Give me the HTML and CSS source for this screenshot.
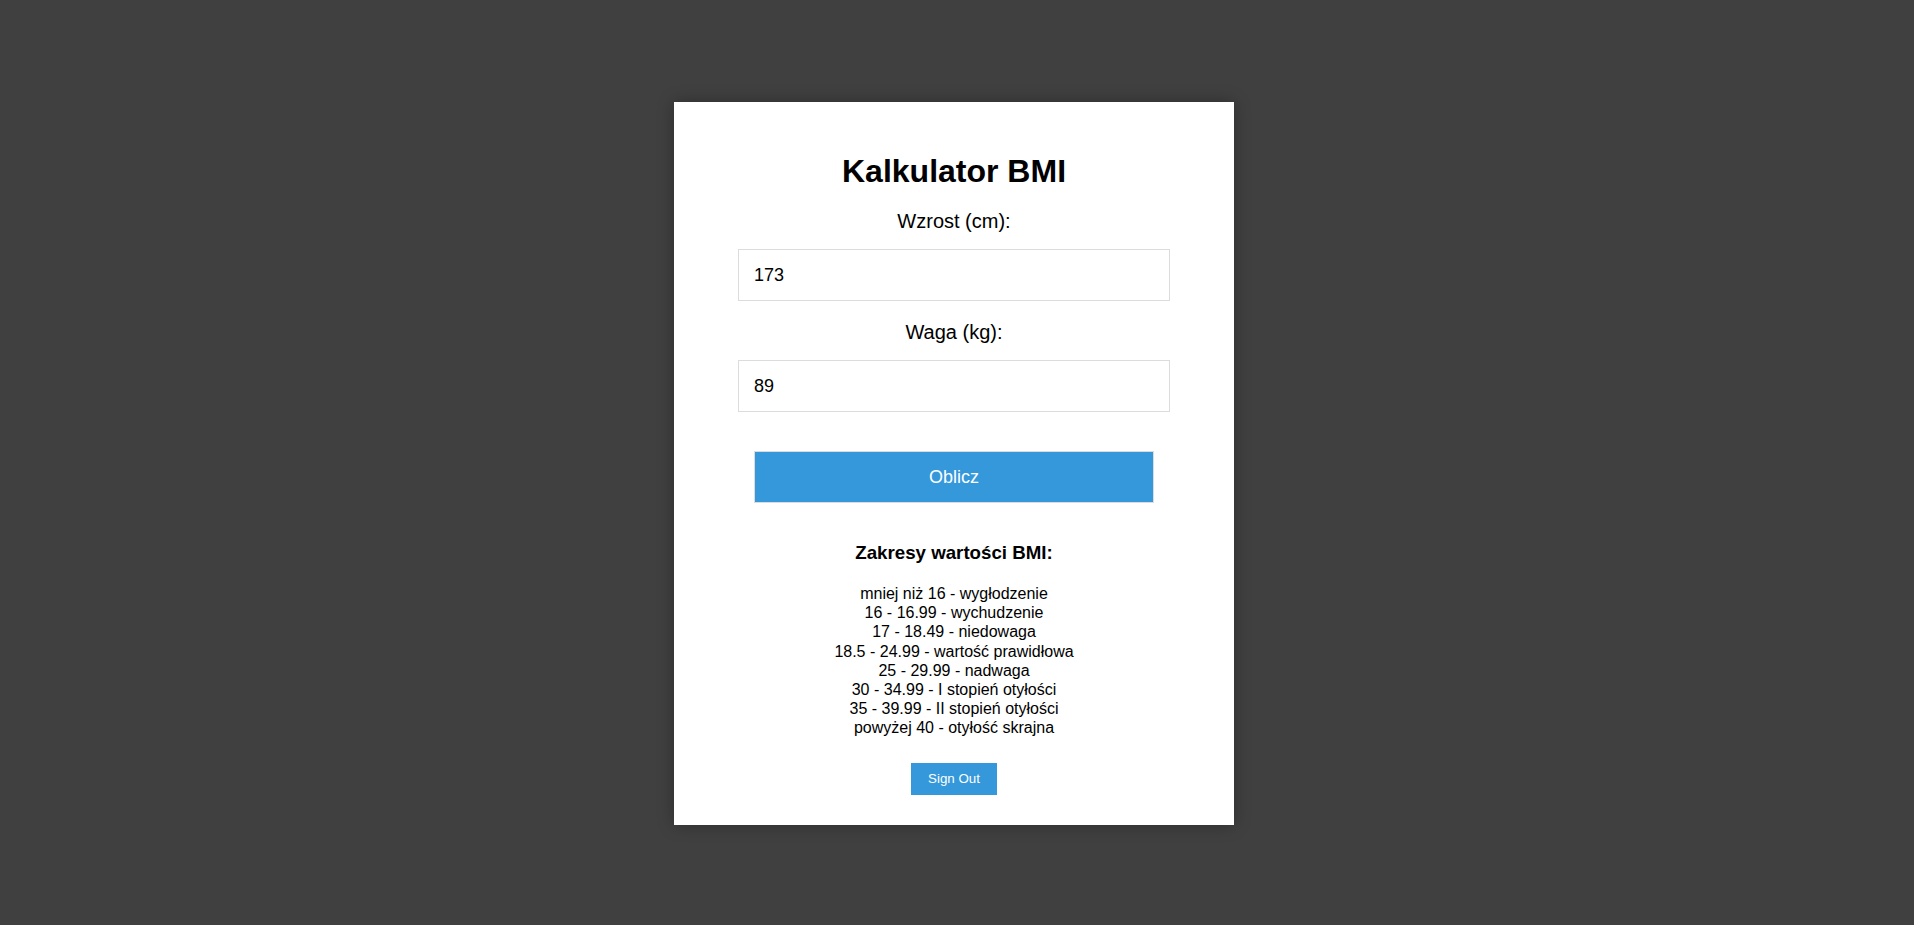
FILE: index.html
```html
<!DOCTYPE html>
<html lang="pl">
<head>
<meta charset="utf-8">
<title>Kalkulator BMI</title>
<link rel="stylesheet" href="styles.css">
</head>
<body>
<div class="page">
  <div class="card">
    <h1 class="title">Kalkulator BMI</h1>
    <label class="label" for="height">Wzrost (cm):</label>
    <input class="field" id="height" type="text" value="173">
    <label class="label" for="weight">Waga (kg):</label>
    <input class="field" id="weight" type="text" value="89">
    <button class="calc-btn" type="button">Oblicz</button>
    <h3 class="ranges-title">Zakresy wartości BMI:</h3>
    <div class="ranges">
      <div>mniej niż 16 - wygłodzenie</div>
      <div>16 - 16.99 - wychudzenie</div>
      <div>17 - 18.49 - niedowaga</div>
      <div>18.5 - 24.99 - wartość prawidłowa</div>
      <div>25 - 29.99 - nadwaga</div>
      <div>30 - 34.99 - I stopień otyłości</div>
      <div>35 - 39.99 - II stopień otyłości</div>
      <div>powyżej 40 - otyłość skrajna</div>
    </div>
    <button class="signout-btn" type="button">Sign Out</button>
  </div>
</div>
</body>
</html>
```

FILE: styles.css
```css
html, body {
  margin: 0;
  padding: 0;
}
body {
  background: #404040;
  font-family: "Liberation Sans", Arial, sans-serif;
  color: #000;
  min-height: 925px;
}
.page {
  display: flex;
  justify-content: center;
  padding: 102px 6px 0 0;
}
.card {
  width: 560px;
  box-sizing: border-box;
  background: #fff;
  padding: 40px 40px 30px;
  text-align: center;
  box-shadow: 0 0 16px rgba(0, 0, 0, 0.3);
}
.title {
  margin: 11px 0 0;
  font-size: 32px;
  line-height: 37px;
  font-weight: bold;
}
.label {
  display: block;
  margin: 20px 0 16px;
  font-size: 20px;
  line-height: 23px;
}
.field {
  display: block;
  width: 432px;
  height: 52px;
  box-sizing: border-box;
  margin: 0 auto;
  padding: 0 15px;
  border: 1px solid #dcdcdc;
  font-family: "Liberation Sans", Arial, sans-serif;
  font-size: 18px;
  color: #000;
  background: #fff;
  outline: none;
}
.calc-btn {
  display: block;
  width: 400px;
  height: 52px;
  box-sizing: border-box;
  margin: 39px auto 0;
  border: 1px solid #dcdcdc;
  background: #3498db;
  color: #fff;
  font-family: "Liberation Sans", Arial, sans-serif;
  font-size: 18px;
  cursor: pointer;
}
.ranges-title {
  margin: 39px 0 0;
  font-size: 18.72px;
  line-height: 22px;
  font-weight: bold;
}
.ranges {
  margin-top: 20px;
  font-size: 16px;
  line-height: 19.2px;
}
.signout-btn {
  display: inline-block;
  margin-top: 25px;
  padding: 8px 17px;
  height: 32px;
  box-sizing: border-box;
  border: none;
  background: #3498db;
  color: #fff;
  font-family: "Liberation Sans", Arial, sans-serif;
  font-size: 13.333px;
  line-height: 16px;
  vertical-align: top;
  cursor: pointer;
}
```
